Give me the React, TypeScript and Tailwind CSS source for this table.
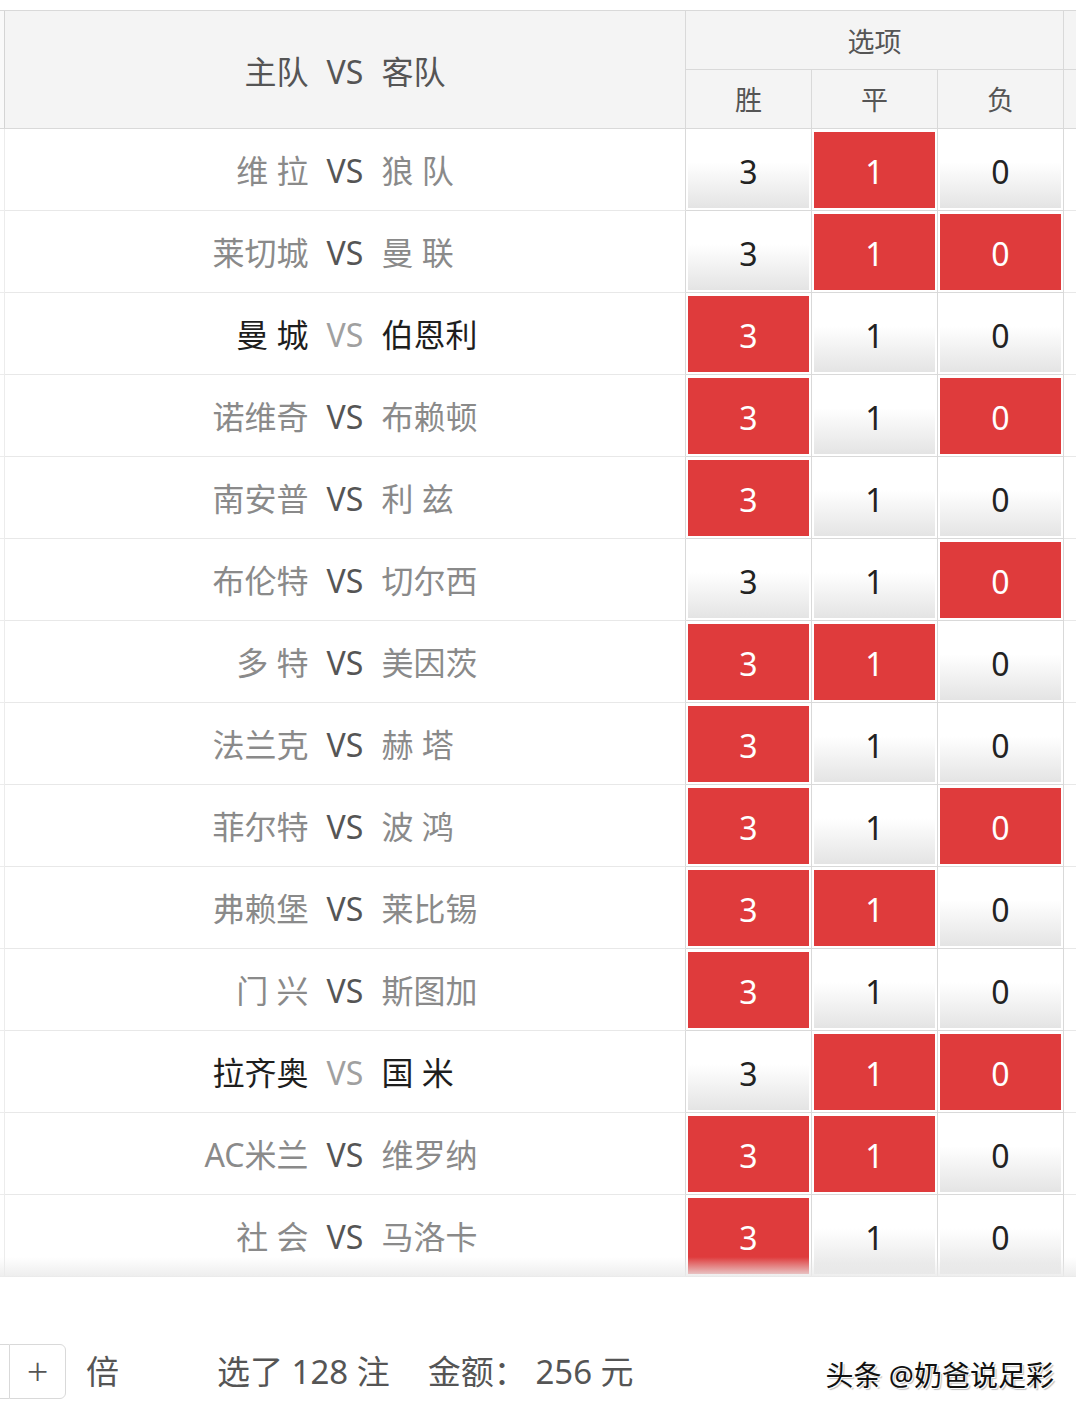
import React from "react";

type Match = {
  home: string;
  away: string;
  picks: [boolean, boolean, boolean];
  strong?: boolean;
};

const matches: Match[] = [
  { home: "维 拉", away: "狼 队", picks: [false, true, false] },
  { home: "莱切城", away: "曼 联", picks: [false, true, true] },
  { home: "曼 城", away: "伯恩利", picks: [true, false, false], strong: true },
  { home: "诺维奇", away: "布赖顿", picks: [true, false, true] },
  { home: "南安普", away: "利 兹", picks: [true, false, false] },
  { home: "布伦特", away: "切尔西", picks: [false, false, true] },
  { home: "多 特", away: "美因茨", picks: [true, true, false] },
  { home: "法兰克", away: "赫 塔", picks: [true, false, false] },
  { home: "菲尔特", away: "波 鸿", picks: [true, false, true] },
  { home: "弗赖堡", away: "莱比锡", picks: [true, true, false] },
  { home: "门 兴", away: "斯图加", picks: [true, false, false] },
  { home: "拉齐奥", away: "国 米", picks: [false, true, true], strong: true },
  { home: "AC米兰", away: "维罗纳", picks: [true, true, false] },
  { home: "社 会", away: "马洛卡", picks: [true, false, false] },
];

const values = ["3", "1", "0"];

function OptionCell({ value, on }: { value: string; on: boolean }) {
  return (
    <div className="w-[126px] shrink-0 border-r border-b border-[#d9d9d9] p-[2px] pt-[3px]">
      {on ? (
        <div className="flex h-full items-center justify-center pt-[4px] bg-[#df3b3c] text-[32px] text-white">
          {value}
        </div>
      ) : (
        <div className="flex h-full items-center justify-center pt-[4px] bg-gradient-to-b from-white from-40% to-[#e4e4e4] text-[32px] text-[#222]">
          {value}
        </div>
      )}
    </div>
  );
}

export default function App() {
  return (
    <div className="relative h-[1413px] w-[1076px] overflow-hidden bg-white font-['Noto_Sans','Noto_Sans_CJK_SC',sans-serif]">
      {/* table */}
      <div className="relative pt-[10px]">
        {/* header */}
        <div className="flex h-[119px] border-y border-[#d9d9d9] bg-[#f4f4f4]">
          <div className="w-[5px] shrink-0 border-r border-[#d4d4d4] bg-[#f9f9f9]" />
          <div className="grid w-[681px] shrink-0 grid-cols-[1fr_auto_1fr] items-center gap-[18px] border-r border-[#d9d9d9] pt-[4px] text-[32px] text-[#555]">
            <span className="text-right">主队</span>
            <span>VS</span>
            <span>客队</span>
          </div>
          <div className="flex w-[378px] shrink-0 flex-col">
            <div className="flex h-[59px] items-center justify-center border-r border-b border-[#d9d9d9] pt-[5px] text-[27px] text-[#555]">
              选项
            </div>
            <div className="flex flex-1">
              {["胜", "平", "负"].map((t) => (
                <div
                  key={t}
                  className="flex w-[126px] items-center justify-center border-r border-[#d9d9d9] pt-[2px] text-[27px] text-[#555]"
                >
                  {t}
                </div>
              ))}
            </div>
          </div>
          <div className="flex flex-1 flex-col">
            <div className="h-[59px] border-b border-[#d9d9d9]" />
          </div>
        </div>

        {/* rows */}
        {matches.map((m, i) => (
          <div key={i} className="flex h-[82px]">
            <div className="w-[5px] shrink-0 border-r border-b border-[#ececec]" />
            <div className="grid w-[681px] shrink-0 grid-cols-[1fr_auto_1fr] items-center gap-[18px] border-r border-b border-r-[#d9d9d9] border-b-[#e8e8e8] pt-[3px] text-[32px]">
              <span className={m.strong ? "text-right text-[#1e1e1e]" : "text-right text-[#8a8a8a]"}>
                {m.home}
              </span>
              <span className={m.strong ? "text-[#a0a0a0]" : "text-[#555]"}>VS</span>
              <span className={m.strong ? "text-[#1e1e1e]" : "text-[#8a8a8a]"}>{m.away}</span>
            </div>
            {m.picks.map((on, j) => (
              <OptionCell key={j} value={values[j]} on={on} />
            ))}
            <div className="flex-1 border-b border-[#e8e8e8]" />
          </div>
        ))}

        {/* bottom fade */}
        <div className="pointer-events-none absolute inset-x-0 bottom-0 h-[20px] bg-gradient-to-b from-white/0 to-[#ebebeb]/90" />
      </div>

      {/* footer */}
      <div className="mt-[67px] flex h-[55px] items-center">
        <div className="h-full w-[9px] border-y border-[#d9d9d9]" />
        <div className="flex h-full w-[57px] items-center justify-center rounded-r-[6px] border border-[#d9d9d9] pb-[2px] text-[38px] leading-none font-light text-[#555]">
          +
        </div>
        <span className="ml-[20px] text-[33px] text-[#555]">倍</span>
        <span className="ml-[98px] text-[33px] text-[#555]">选了 128 注</span>
        <span className="ml-[38px] text-[33px] text-[#555]">金额：&nbsp;256 元</span>
        <span className="ml-auto mr-[22px] mt-[6px] text-[28px] text-[#111] [text-shadow:1px_1px_0_#fff,2px_2px_1px_rgba(0,0,0,0.25)]">
          头条 @奶爸说足彩
        </span>
      </div>
    </div>
  );
}
